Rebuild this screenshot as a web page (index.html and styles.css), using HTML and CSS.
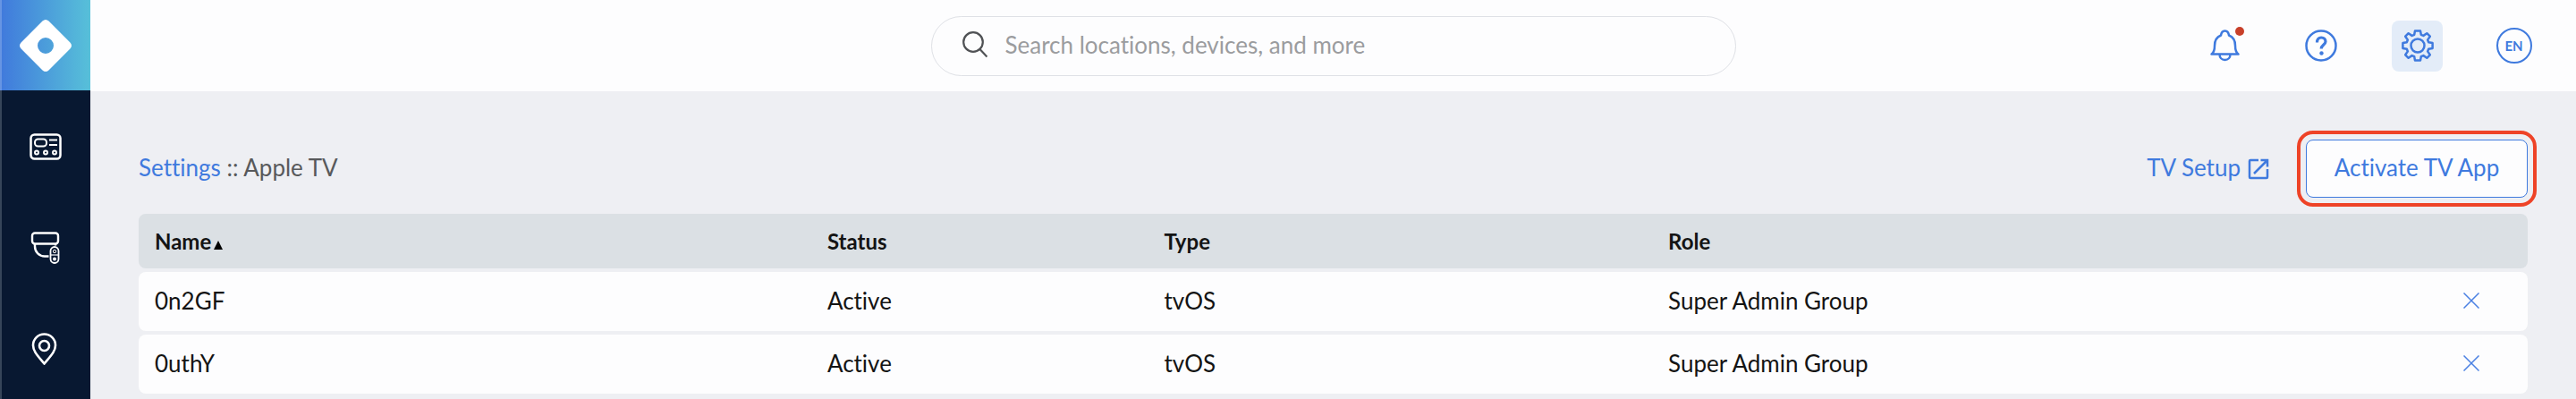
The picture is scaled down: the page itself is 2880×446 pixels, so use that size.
FILE: index.html
```html
<!DOCTYPE html>
<html lang="en">
<head>
  <meta charset="UTF-8">
  <meta name="viewport" content="width=device-width, initial-scale=1.0">
  <title>Settings :: Apple TV</title>
  <link rel="stylesheet" href="styles.css">
</head>
<body>
  <aside class="sidebar">
    <a href="#" class="logo" aria-label="Home">
      <svg width="60" height="60" viewBox="0 0 60 60">
        <path fill="#fff" fill-rule="evenodd" d="M26.5 2.6 Q30 -0.6 33.5 2.6 L57.4 26.5 Q60.6 30 57.4 33.5 L33.5 57.4 Q30 60.6 26.5 57.4 L2.6 33.5 Q-0.6 30 2.6 26.5 Z M30 21 a9 9 0 1 0 0 18 a9 9 0 1 0 0 -18 Z"/>
      </svg>
    </a>
    <nav>
      <a href="#" aria-label="Panels">
        <svg width="36" height="36" viewBox="0 0 36 36" fill="none" stroke="#fff" stroke-width="2">
          <rect x="1.5" y="4.5" width="33" height="27" rx="4" stroke-width="2.5"/>
          <rect x="6" y="9.5" width="13" height="8" rx="3.5"/>
          <path d="M22 10.5h9M22 16h9"/>
          <circle cx="8" cy="24.5" r="2"/>
          <circle cx="18" cy="24.5" r="2"/>
          <circle cx="28" cy="24.5" r="2"/>
        </svg>
      </a>
      <a href="#" aria-label="Cameras">
        <svg width="36" height="36" viewBox="0 0 36 36" fill="none" stroke="#fff" stroke-width="2.4">
          <rect x="3" y="1.5" width="29" height="12" rx="3"/>
          <path d="M6 13.5v3C6 23 11 27.500 17 27.500h4.500M29 13.500v2"/>
          <rect x="23.5" y="17" width="9" height="18" rx="4.5" stroke-width="1.8"/>
          <circle cx="28" cy="22" r="1.7" stroke-width="1"/>
          <path d="M23.500 26h9" stroke-width="1.2"/>
          <circle cx="28" cy="30.5" r="2" fill="#fff" stroke="none"/>
        </svg>
      </a>
      <a href="#" aria-label="Locations">
        <svg width="36" height="36" viewBox="0 0 36 36" fill="none" stroke="#fff" stroke-width="2.6">
          <path d="M16.500 34.500C10 26.500 4 21 4 14a12.500 12.500 0 0 1 25 0C29 21 23 26.500 16.500 34.500Z"/>
          <circle cx="16.5" cy="14.5" r="5.5"/>
        </svg>
      </a>
    </nav>
  </aside>

  <div class="page">
    <header class="topbar">
      <label class="search">
        <svg width="28" height="30" viewBox="0 0 28 30" fill="none" stroke="#505255" stroke-width="2.2">
          <circle cx="12" cy="12" r="10.8"/>
          <path d="M19.500 20l8 8.500"/>
        </svg>
        <input type="text" placeholder="Search locations, devices, and more" aria-label="Search">
      </label>
      <div class="actions">
        <button type="button" aria-label="Notifications">
          <svg width="36" height="36" viewBox="0 0 36 36" fill="none" stroke="#3f7ade" stroke-width="2.5" stroke-linejoin="round">
            <path d="M3.500 27.500C6.500 25.500 7 23 7 18c0-6 2-9.500 7-11.500C14.500 3 16 1.500 18.500 1.500S22.500 3 23 6.500c5 2 7 5.500 7 11.500 0 5 .5 7.500 3.500 9.500Z"/>
            <path d="M12.500 27.500c0 4 2.500 6.500 6 6.500s6-2.500 6-6.500"/>
          </svg>
          <span class="dot"></span>
        </button>
        <button type="button" aria-label="Help">
          <svg width="36" height="36" viewBox="0 0 36 36" fill="none" stroke="#3f7ade" stroke-width="2.5">
            <circle cx="18" cy="18" r="16.5"/>
            <path d="M13.500 14.500c0-3.500 2-5.500 4.700-5.500 2.800 0 4.800 1.800 4.800 4.500 0 3.500-4.800 3.500-4.800 8" stroke-width="3.2"/>
            <circle cx="18.5" cy="26.5" r="2.2" fill="#3f7ade" stroke="none"/>
          </svg>
        </button>
        <button type="button" class="active" aria-label="Settings">
          <svg width="36" height="36" viewBox="0 0 36 36" fill="none" stroke="#3f7ade" stroke-width="2.5" stroke-linejoin="round">
            <path d="M15 1.400h6l.8 4.400 2.600 1.100 3.900-2.700 3.500 3.500-2.700 3.900 1.100 2.600 4.400.8v6l-4.400.8-1.100 2.600 2.700 3.900-3.500 3.500-3.900-2.700-2.600 1.100-.8 4.400h-6l-.8-4.400-2.600-1.100-3.900 2.700-3.500-3.500 2.700-3.900-1.100-2.600-4.400-.8v-6l4.400-.8 1.100-2.600-2.700-3.900 3.500-3.500 3.900 2.700 2.600-1.100Z"/>
            <circle cx="18" cy="18" r="7.5"/>
          </svg>
        </button>
        <button type="button" aria-label="Account"><span class="avatar">EN</span></button>
      </div>
    </header>

    <main>
      <div class="title-row">
        <h1><a href="#">Settings</a> :: Apple TV</h1>
        <a href="#" class="setup"><span>TV Setup</span>
          <svg width="24" height="24" viewBox="0 0 24 24" fill="none" stroke="#3f7ade" stroke-width="2.5">
            <path d="M12 2H3a1 1 0 0 0-1 1v18a1 1 0 0 0 1 1h18a1 1 0 0 0 1-1v-9M14.500 2H22v7.500M22 2L7 17"/>
          </svg>
        </a>
        <button type="button" class="activate">Activate TV App</button>
      </div>

      <table>
        <thead>
          <tr>
            <th class="name">Name<svg width="10" height="10" viewBox="0 0 10 10"><path d="M5 0l5 10H0Z"/></svg></th>
            <th class="status">Status</th>
            <th class="type">Type</th>
            <th>Role</th>
            <th class="remove"></th>
          </tr>
        </thead>
        <tbody>
          <tr>
            <td>0n2GF</td>
            <td>Active</td>
            <td>tvOS</td>
            <td>Super Admin Group</td>
            <td class="remove">
              <button type="button" aria-label="Remove 0n2GF">
                <svg width="18" height="18" viewBox="0 0 18 18" stroke="#4a80e2" stroke-width="1.5"><path d="M.5.5l17 17M17.500.5l-17 17"/></svg>
              </button>
            </td>
          </tr>
          <tr>
            <td>0uthY</td>
            <td>Active</td>
            <td>tvOS</td>
            <td>Super Admin Group</td>
            <td class="remove">
              <button type="button" aria-label="Remove 0uthY">
                <svg width="18" height="18" viewBox="0 0 18 18" stroke="#4a80e2" stroke-width="1.5"><path d="M.5.5l17 17M17.500.5l-17 17"/></svg>
              </button>
            </td>
          </tr>
        </tbody>
      </table>
    </main>
  </div>
</body>
</html>
```
FILE: styles.css
```css
* {
  box-sizing: border-box;
}

body {
  margin: 0;
  min-height: 100vh;
  display: flex;
  background-color: #eeeff3;
  color: #141414;
  font-family: Lato, "Liberation Sans", sans-serif;
  font-size: 26px;
  font-variant-ligatures: none;
  line-height: 32px;
}

a {
  color: #3f7ade;
  text-decoration: none;
}

button {
  padding: 0;
  border: none;
  background: none;
  color: #3f7ade;
  font: inherit;
  cursor: pointer;
}

svg {
  display: block;
}

/* sidebar */
.sidebar {
  flex: none;
  width: 101px;
  background-color: #081831;
  box-shadow: inset 2px 0 #364559;
}

.logo {
  display: flex;
  align-items: center;
  justify-content: center;
  height: 101px;
  background: linear-gradient(90deg, #4079dc, #57c0d9);
  box-shadow: inset 2px 0 #6795e3;
}

.sidebar nav {
  padding-top: 6px;
}

.sidebar nav a {
  display: flex;
  align-items: center;
  justify-content: center;
  height: 113px;
}

/* top bar */
.page {
  flex: 1;
  min-width: 0;
}

.topbar {
  display: grid;
  grid-template-columns: 1fr minmax(0, 900px) 1fr;
  align-items: center;
  height: 102px;
  background-color: #fdfdfe;
}

.search {
  grid-column: 2;
  display: flex;
  align-items: center;
  gap: 20px;
  height: 67px;
  padding: 0 34px 2px;
  border: 1px solid #dfe1e6;
  border-radius: 34px;
}

.search input {
  flex: 1;
  min-width: 0;
  padding: 0;
  border: none;
  outline: none;
  background: none;
  color: #141414;
  font: inherit;
}

.search input::placeholder {
  color: #9b9c9e;
}

.actions {
  display: flex;
  justify-content: flex-end;
  gap: 51px;
  padding-right: 41px;
}

.actions button {
  position: relative;
  display: flex;
  align-items: center;
  justify-content: center;
  width: 57px;
  height: 57px;
  border-radius: 8px;
}

.actions .active {
  background-color: #e3ecf8;
}

.dot {
  position: absolute;
  top: 7px;
  right: 6px;
  width: 10px;
  height: 10px;
  border-radius: 50%;
  background-color: #c8402a;
}

.avatar {
  width: 40px;
  height: 40px;
  border: 2px solid #3f7ade;
  border-radius: 50%;
  font-size: 15px;
  font-weight: bold;
  line-height: 36px;
}

/* content */
main {
  padding: 54px 54px 0;
}

.title-row {
  display: flex;
  align-items: center;
  height: 65px;
  margin-bottom: 14px;
}

h1 {
  margin: 0 auto 0 0;
  padding-bottom: 4px;
  color: #58595b;
  font-size: 26px;
  font-weight: normal;
}

.setup {
  display: flex;
  align-items: center;
  gap: 8px;
  margin-right: 41px;
}

.setup span {
  padding-bottom: 4px;
}

.activate {
  width: 248px;
  height: 65px;
  padding-bottom: 4px;
  border: 1px solid #3f7ade;
  border-radius: 8px;
  outline: 4px solid #ee4327;
  outline-offset: 6px;
  background-color: #fdfdfe;
}

table {
  width: 100%;
  border-spacing: 0 4px;
  table-layout: fixed;
}

th,
td {
  padding: 0 18px;
  text-align: left;
}

th {
  height: 61px;
  background-color: #dbe0e4;
  font-size: 24px;
}

th svg {
  display: inline-block;
  margin-left: 3px;
}

td {
  height: 66px;
  padding-bottom: 2px;
  background-color: #fdfdfe;
}

th:first-child,
td:first-child {
  border-radius: 8px 0 0 8px;
}

th:last-child,
td:last-child {
  border-radius: 0 8px 8px 0;
}

.name {
  width: 28.15%;
}

.status {
  width: 14.1%;
}

.type {
  width: 21.1%;
}

.remove {
  width: 126px;
}

.remove button {
  display: flex;
  align-items: center;
  justify-content: center;
  width: 90px;
  height: 36px;
}
```
